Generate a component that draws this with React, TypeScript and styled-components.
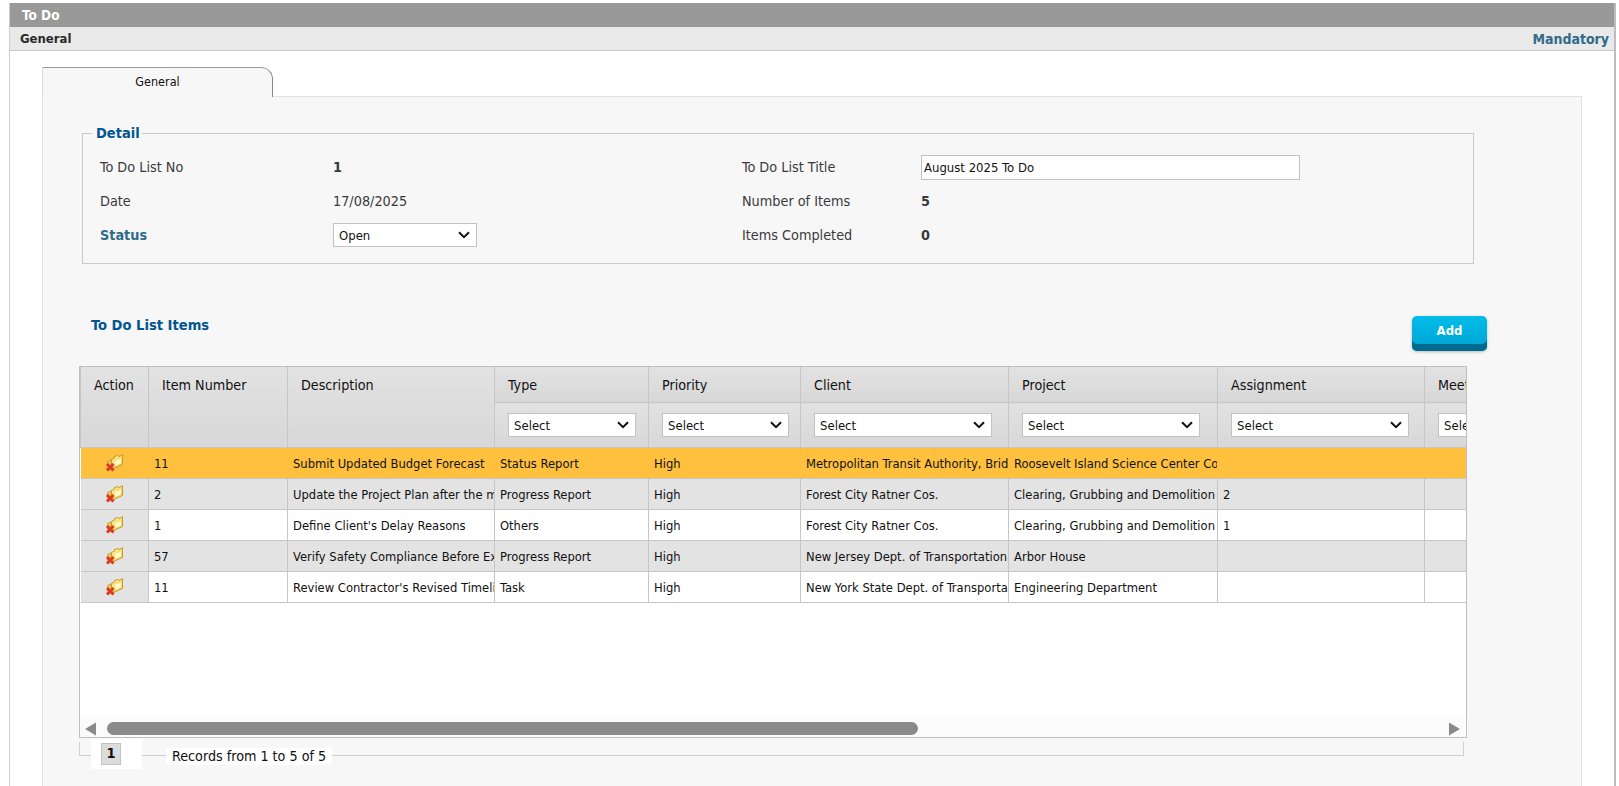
import React from 'react';
import styled, { createGlobalStyle } from 'styled-components';

const FONT = `'DejaVu Sans Condensed', 'DejaVu Sans', 'Liberation Sans', sans-serif`;

const GlobalStyle = createGlobalStyle`
  html, body {
    margin: 0;
    padding: 0;
    height: 786px;
    overflow: hidden;
    background: #ffffff;
    font-family: ${FONT};
    font-stretch: condensed;
    font-size: 13px;
    color: #333;
  }
`;

const Page = styled.div`
  box-sizing: border-box;
  height: 786px;
  padding: 3px 3px 0 9px;
`;

const Frame = styled.div`
  height: 100%;
  border-left: 1px solid #cfcfcf;
  border-right: 2px solid #bdbdbd;
`;

const TitleBar = styled.div`
  height: 24px;
  background: #999999;
  color: #fff;
  font-weight: 700;
  font-size: 13.5px;
  line-height: 24px;
  padding-left: 12px;
`;

const SubBar = styled.div`
  box-sizing: content-box;
  height: 23px;
  background: #e9e9e9;
  border-bottom: 1px solid #cccccc;
  display: flex;
  align-items: center;
  justify-content: space-between;
  padding: 0 5px 0 10px;
  font-weight: 700;
  color: #2b2b2b;
`;

const Mandatory = styled.span`
  color: #2f6b8a;
  font-size: 14px;
`;

const Content = styled.div`
  padding: 16px 32px 0 32px;
`;

const Tab = styled.div`
  box-sizing: border-box;
  width: 231px;
  height: 30px;
  margin-bottom: -1px;
  position: relative;
  z-index: 1;
  background: #f7f7f7;
  border-top: 1px solid #9a9a9a;
  border-right: 1px solid #8a8a8a;
  border-left: 1px solid #d8d8d8;
  border-top-right-radius: 12px;
  text-align: center;
  color: #111;
  font-size: 12.5px;
  line-height: 28px;
`;

const Panel = styled.div`
  box-sizing: border-box;
  height: 700px;
  background: #f7f7f7;
  border: 1px solid #e3e3e3;
  padding: 28px 0 0 37px;
`;

const DetailSet = styled.fieldset`
  box-sizing: border-box;
  width: 1392px;
  height: 139px;
  margin: 0 0 0 2px;
  padding: 8px 0 0 17px;
  border: 1px solid #c9c9c9;
  min-inline-size: 0;
`;

const DetailLegend = styled.legend`
  margin-left: -8px;
  padding: 0 2px 0 4px;
  color: #00568f;
  font-weight: 700;
  font-size: 14.5px;
  line-height: 17px;
`;

const DetailGrid = styled.div`
  display: grid;
  grid-template-columns: 233px 409px 179px 1fr;
  grid-auto-rows: 34px;
  align-items: center;
`;

const Label = styled.div<{ $required?: boolean }>`
  font-size: 14.3px;
  color: ${p => (p.$required ? '#2f6b8a' : '#3a3a3a')};
  font-weight: ${p => (p.$required ? 700 : 400)};
`;

const Value = styled.div<{ $bold?: boolean }>`
  font-size: 14.3px;
  color: #3a3a3a;
  font-weight: ${p => (p.$bold ? 700 : 400)};
`;

const chevron = `url("data:image/svg+xml,%3Csvg xmlns='http://www.w3.org/2000/svg' width='12' height='8' viewBox='0 0 12 8'%3E%3Cpath d='M1 1.2l5 5 5-5' fill='none' stroke='%23111' stroke-width='2'/%3E%3C/svg%3E")`;

const Select = styled.select<{ $width: number }>`
  box-sizing: border-box;
  appearance: none;
  display: block;
  width: ${p => p.$width}px;
  height: 24px;
  flex: none;
  padding: 1px 0 0 5px;
  background: #fff ${chevron} no-repeat right 6px center;
  border: 1px solid #c2c2c2;
  border-radius: 0;
  color: #111;
  font-family: ${FONT};
  font-stretch: condensed;
  font-size: 13px;
`;

const TitleInput = styled.input`
  box-sizing: border-box;
  width: 379px;
  height: 25px;
  padding: 0 2px;
  background: #fff;
  border: 1px solid #c2c2c2;
  color: #111;
  font-family: ${FONT};
  font-stretch: condensed;
  font-size: 13px;
`;

const ItemsHeader = styled.div`
  display: flex;
  justify-content: space-between;
  align-items: flex-start;
  width: 1407px;
  height: 102px;
  padding: 52px 0 0 11px;
  box-sizing: border-box;
`;

const ItemsTitle = styled.div`
  color: #00568f;
  font-weight: 700;
  font-size: 14.6px;
  line-height: 17px;
`;

const AddButton = styled.button`
  box-sizing: border-box;
  width: 75px;
  height: 35px;
  border: 0;
  border-radius: 5px;
  background: linear-gradient(#00bdea, #00a2d1);
  box-shadow: inset 0 -7px 0 #006b8f, 0 1px 3px rgba(0, 0, 0, 0.25);
  color: #fff;
  font-family: ${FONT};
  font-stretch: condensed;
  font-weight: 700;
  font-size: 13px;
  padding: 0 0 7px;
`;

const GridBox = styled.div`
  box-sizing: border-box;
  width: 1388px;
  margin-left: -1px;
  height: 372px;
  border: 1px solid #bfbfbf;
  background: #fff;
  display: flex;
  flex-direction: column;
`;

const GridViewport = styled.div`
  flex: 1;
  overflow: hidden;
`;

const Table = styled.table`
  border-collapse: collapse;
  table-layout: fixed;
  width: 1600px;
  font-size: 12.85px;
  color: #111;
`;

const Th = styled.th<{ $top?: boolean }>`
  box-sizing: border-box;
  height: ${p => (p.$top ? 35 : 45)}px;
  padding: ${p => (p.$top ? '1px' : '0')} 0 0 13px;
  border: 1px solid #c6c6c6;
  border-top: 0;
  background: linear-gradient(#e2e2e2, #d7d7d7);
  font-weight: 400;
  font-size: 14.2px;
  text-align: left;
  vertical-align: ${p => (p.$top ? 'top' : 'middle')};
  line-height: ${p => (p.$top ? '34px' : 'normal')};
  white-space: nowrap;
  overflow: hidden;
`;

const ActionTh = styled(Th)`
  height: 80px;
`;

const Row = styled.tr<{ $tone: 'active' | 'grey' | 'white' }>`
  height: 31px;
  background: ${p => (p.$tone === 'active' ? '#ffc13d' : p.$tone === 'grey' ? '#e3e3e3' : '#fff')};
`;

const Td = styled.td<{ $active?: boolean }>`
  box-sizing: border-box;
  padding: 1px 0 0 5px;
  border-bottom: 1px solid #c6c6c6;
  border-right: 1px solid ${p => (p.$active ? '#ffc13d' : '#c6c6c6')};
  white-space: nowrap;
  overflow: hidden;
`;

const ActionTd = styled(Td)<{ $active?: boolean }>`
  padding: 0;
  text-align: center;
  background: ${p => (p.$active ? 'transparent' : '#e3e3e3')};
  line-height: 0;
`;

const ScrollBar = styled.div`
  box-sizing: border-box;
  height: 20px;
  flex: none;
  display: flex;
  align-items: flex-start;
  padding: 5px 6px 0 5px;
  gap: 11px;
  background: #fbfbfb;
`;

const ScrollThumb = styled.div`
  width: 811px;
  height: 13px;
  border-radius: 7px;
  background: #8a8a8a;
`;

const ScrollSpacer = styled.div`
  flex: 1;
`;

const Pager = styled.div`
  box-sizing: border-box;
  width: 1385px;
  height: 14px;
  margin: 4px 0 0 -1px;
  border: 1px solid #cfcfcf;
  border-top: 0;
  display: flex;
  align-items: flex-end;
`;

const PageCell = styled.div`
  flex: none;
  width: 51px;
  height: 30px;
  margin: 0 0 -14px 11px;
  box-sizing: border-box;
  padding: 4px 0 0 10px;
  background: #fff;
`;

const PageButton = styled.div`
  box-sizing: border-box;
  width: 20px;
  height: 22px;
  background: #dcdcdc;
  border: 1px solid #c2c2c2;
  font-weight: 700;
  font-size: 14.5px;
  line-height: 18px;
  text-align: center;
  color: #111;
`;

const Records = styled.div`
  flex: none;
  height: 17px;
  margin: 0 0 -10px 24px;
  padding: 0 6px;
  background: #fff;
  color: #111;
  font-size: 14.2px;
  line-height: 17px;
`;

const ArrowIcon = ({ right }: { right?: boolean }) => (
  <svg width="11" height="14" viewBox="0 0 11 14" style={{ flex: 'none' }}>
    <path d={right ? 'M0 0.5L11 7L0 13.5Z' : 'M11 0.5L0 7L11 13.5Z'} fill="#8a8a8a" />
  </svg>
);

const RemoveIcon = () => (
  <svg width="19" height="18" viewBox="0 0 19 18" style={{ verticalAlign: 'middle' }}>
    <defs>
      <linearGradient id="folderFill" x1="0" y1="0" x2="1" y2="1">
        <stop offset="0" stopColor="#fff3a8" />
        <stop offset="1" stopColor="#f2c838" />
      </linearGradient>
    </defs>
    <path d="M2.5 7.5l3-1.5h4v8h-6.5z" fill="#e9c65a" stroke="#bd9a3a" strokeWidth="0.8" />
    <path d="M6.5 5.5l3-1.5V2.5l3-1 1.5 1 3.5-1.8V10.5l-8 3.5H6.5z" fill="url(#folderFill)" stroke="#c39a2c" strokeWidth="1" />
    <path d="M10 7l6-2.5v5l-6 2.5z" fill="#fff8cf" />
    <path d="M2 10l6.5 6.5M8.5 10L2 16.5" stroke="#de3a22" strokeWidth="3" />
  </svg>
);

const columns = [
  { name: 'Action', width: 68 },
  { name: 'Item Number', width: 139 },
  { name: 'Description', width: 207 },
  { name: 'Type', width: 154, select: 128 },
  { name: 'Priority', width: 152, select: 127 },
  { name: 'Client', width: 208, select: 178 },
  { name: 'Project', width: 209, select: 178 },
  { name: 'Assignment', width: 207, select: 178 },
  { name: 'Meeting', width: 256, select: 178 },
];

const rows = [
  ['11', 'Submit Updated Budget Forecast', 'Status Report', 'High', 'Metropolitan Transit Authority, Bridges and Tunnels', 'Roosevelt Island Science Center Complex', '', ''],
  ['2', 'Update the Project Plan after the meeting', 'Progress Report', 'High', 'Forest City Ratner Cos.', 'Clearing, Grubbing and Demolition', '2', ''],
  ['1', "Define Client's Delay Reasons", 'Others', 'High', 'Forest City Ratner Cos.', 'Clearing, Grubbing and Demolition', '1', ''],
  ['57', 'Verify Safety Compliance Before Excavation', 'Progress Report', 'High', 'New Jersey Dept. of Transportation', 'Arbor House', '', ''],
  ['11', "Review Contractor's Revised Timeline", 'Task', 'High', 'New York State Dept. of Transportation', 'Engineering Department', '', ''],
];

const App: React.FC = () => (
  <>
    <GlobalStyle />
    <Page>
      <Frame>
        <TitleBar>To Do</TitleBar>
        <SubBar>
          <span>General</span>
          <Mandatory>Mandatory</Mandatory>
        </SubBar>
        <Content>
          <Tab>General</Tab>
          <Panel>
            <DetailSet>
              <DetailLegend>Detail</DetailLegend>
              <DetailGrid>
                <Label>To Do List No</Label>
                <Value $bold>1</Value>
                <Label>To Do List Title</Label>
                <div>
                  <TitleInput defaultValue="August 2025 To Do" />
                </div>
                <Label>Date</Label>
                <Value>17/08/2025</Value>
                <Label>Number of Items</Label>
                <Value $bold>5</Value>
                <Label $required>Status</Label>
                <div>
                  <Select $width={144} defaultValue="Open">
                    <option>Open</option>
                    <option>Closed</option>
                  </Select>
                </div>
                <Label>Items Completed</Label>
                <Value $bold>0</Value>
              </DetailGrid>
            </DetailSet>

            <ItemsHeader>
              <ItemsTitle>To Do List Items</ItemsTitle>
              <AddButton>Add</AddButton>
            </ItemsHeader>

            <GridBox>
              <GridViewport>
                <Table>
                  <colgroup>
                    {columns.map(c => (
                      <col key={c.name} style={{ width: c.width }} />
                    ))}
                  </colgroup>
                  <thead>
                    <tr>
                      {columns.map(c =>
                        c.select ? (
                          <Th key={c.name} $top>
                            {c.name}
                          </Th>
                        ) : (
                          <ActionTh key={c.name} $top rowSpan={2}>
                            {c.name}
                          </ActionTh>
                        ),
                      )}
                    </tr>
                    <tr>
                      {columns
                        .filter(c => c.select)
                        .map(c => (
                          <Th key={c.name}>
                            <Select $width={c.select as number} defaultValue="Select">
                              <option>Select</option>
                            </Select>
                          </Th>
                        ))}
                    </tr>
                  </thead>
                  <tbody>
                    {rows.map((row, i) => {
                      const active = i === 0;
                      const tone = active ? 'active' : i % 2 === 1 ? 'grey' : 'white';
                      return (
                        <Row key={i} $tone={tone}>
                          <ActionTd $active={active}>
                            <RemoveIcon />
                          </ActionTd>
                          {row.map((cell, j) => (
                            <Td key={j} $active={active}>
                              {cell}
                            </Td>
                          ))}
                        </Row>
                      );
                    })}
                  </tbody>
                </Table>
              </GridViewport>
              <ScrollBar>
                <ArrowIcon />
                <ScrollThumb />
                <ScrollSpacer />
                <ArrowIcon right />
              </ScrollBar>
            </GridBox>

            <Pager>
              <PageCell>
                <PageButton>1</PageButton>
              </PageCell>
              <Records>Records from 1 to 5 of 5</Records>
            </Pager>
          </Panel>
        </Content>
      </Frame>
    </Page>
  </>
);

export default App;
